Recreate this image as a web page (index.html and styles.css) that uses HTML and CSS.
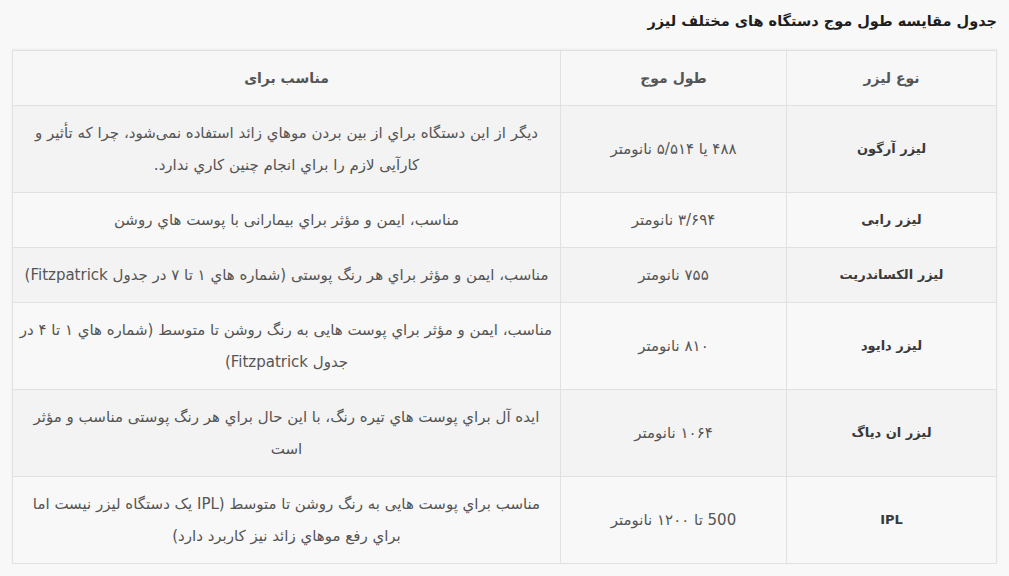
FILE: index.html
```html
<!DOCTYPE html>
<html lang="fa" dir="rtl">
<head>
<meta charset="utf-8">
<title>جدول مقایسه طول موج دستگاه های مختلف لیزر</title>
<link rel="stylesheet" href="styles.css">
</head>
<body>
<div class="page">
  <h2 class="title">جدول مقایسه طول موج دستگاه های مختلف لیزر</h2>
  <table class="laser-table">
    <colgroup>
      <col class="c-type">
      <col class="c-wave">
      <col class="c-use">
    </colgroup>
    <thead>
      <tr>
        <th>نوع لیزر</th>
        <th>طول موج</th>
        <th>مناسب برای</th>
      </tr>
    </thead>
    <tbody>
      <tr>
        <td class="name">لیزر آرگون</td>
        <td class="wave">۴۸۸ یا ۵/۵۱۴ نانومتر</td>
        <td class="use">دیگر از این دستگاه براي از بین بردن موهاي زائد استفاده نمی‌شود، چرا که تأثیر و<br>کارآیی لازم را براي انجام چنین کاري ندارد.</td>
      </tr>
      <tr>
        <td class="name">لیزر رابی</td>
        <td class="wave">۳/۶۹۴ نانومتر</td>
        <td class="use">مناسب، ایمن و مؤثر براي بیمارانی با پوست هاي روشن</td>
      </tr>
      <tr>
        <td class="name">لیزر الکساندریت</td>
        <td class="wave">۷۵۵ نانومتر</td>
        <td class="use">مناسب، ایمن و مؤثر براي هر رنگ پوستی (شماره هاي ۱ تا ۷ در جدول Fitzpatrick)</td>
      </tr>
      <tr>
        <td class="name">لیزر دایود</td>
        <td class="wave">۸۱۰ نانومتر</td>
        <td class="use">مناسب، ایمن و مؤثر براي پوست هایی به رنگ روشن تا متوسط (شماره هاي ۱ تا ۴ در<br>جدول Fitzpatrick)</td>
      </tr>
      <tr>
        <td class="name">لیزر ان دیاگ</td>
        <td class="wave">۱۰۶۴ نانومتر</td>
        <td class="use">ایده آل براي پوست هاي تیره رنگ، با این حال براي هر رنگ پوستی مناسب و مؤثر<br>است</td>
      </tr>
      <tr>
        <td class="name">IPL</td>
        <td class="wave">500 تا ۱۲۰۰ نانومتر</td>
        <td class="use">مناسب براي پوست هایی به رنگ روشن تا متوسط (IPL یک دستگاه لیزر نیست اما<br>براي رفع موهاي زائد نیز کاربرد دارد)</td>
      </tr>
    </tbody>
  </table>
</div>
</body>
</html>
```

FILE: styles.css
```css
html, body {
  margin: 0;
  padding: 0;
  background: #f8f8f8;
}

body {
  font-family: "DejaVu Sans", "Noto Sans", sans-serif;
  color: #555;
  width: 1009px;
  height: 576px;
  overflow: hidden;
}

.page {
  padding: 9px 12px 0 13px;
}

.title {
  margin: 0 0 17px 0;
  font-size: 14.5px;
  line-height: 24px;
  font-weight: bold;
  color: #1e1e1e;
}

.laser-table {
  width: 984px;
  border-collapse: collapse;
  table-layout: fixed;
  background: #f8f8f8;
  box-shadow: 0 -1px 2px rgba(0, 0, 0, 0.06);
}

.c-type { width: 210px; }
.c-wave { width: 226px; }
.c-use { width: 548px; }

.laser-table th,
.laser-table td {
  border: 1px solid #e1e1e1;
  padding: 11px 8px;
  font-size: 15px;
  line-height: 32px;
  text-align: center;
  vertical-align: middle;
}

.laser-table th {
  font-size: 14px;
  font-weight: bold;
  color: #555;
  background: #f7f7f7;
}

.laser-table td {
  color: #555;
}

.laser-table td.use {
  white-space: nowrap;
}

.laser-table td.name {
  font-size: 13px;
  font-weight: bold;
  color: #3a3a3a;
}

.laser-table tbody tr:nth-child(odd) td {
  background: #f3f3f3;
}

.laser-table tbody tr:nth-child(even) td {
  background: #f8f8f8;
}
```
